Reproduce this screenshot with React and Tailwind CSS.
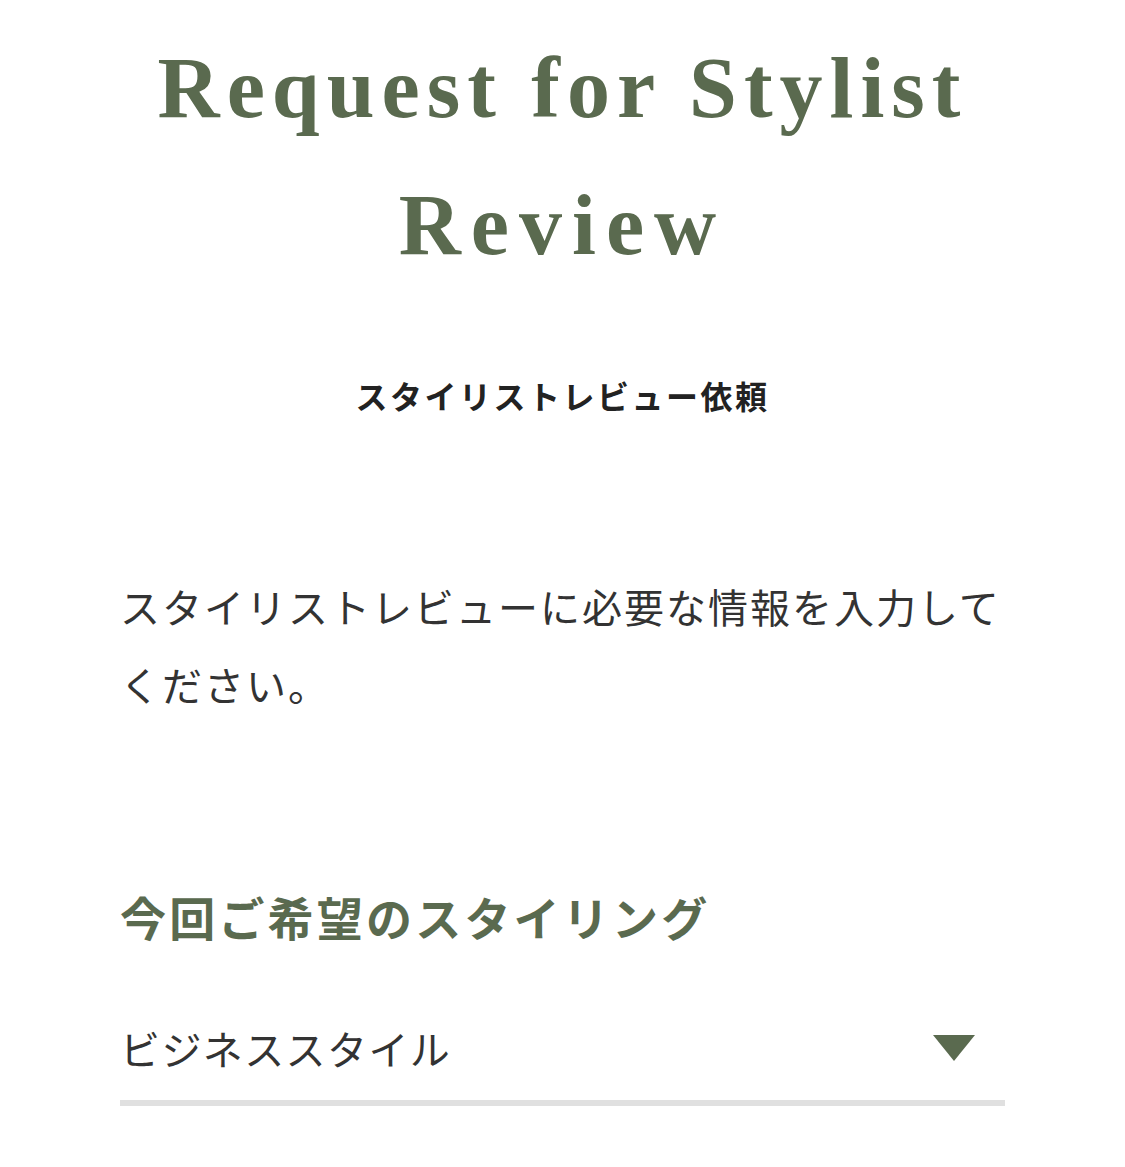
import React from "react";

const Triangle = () => (
  <svg width="42" height="26" viewBox="0 0 42 26" className="shrink-0">
    <polygon points="0,0 42,0 21,26" fill="#5a6a4f" />
  </svg>
);

const App = () => {
  return (
    <div className="min-h-[1167px] bg-white px-[120px]">
      <h1 className="pt-[20px] text-center font-['Liberation_Serif',serif] text-[86px] font-bold leading-[137px] tracking-[7px] text-[#5a6a4f]">
        Request for Stylist
        <br />
        <span className="tracking-[10px]">Review</span>
      </h1>
      <h2 className="mt-[80px] text-center font-['Liberation_Serif','Noto_Sans_CJK_JP',serif] text-[32px] font-bold leading-[48px] tracking-[2.5px] text-[#222]">
        スタイリストレビュー依頼
      </h2>
      <p className="mt-[145px] font-['Noto_Sans_CJK_JP',sans-serif] text-[40px] leading-[78px] tracking-[2px] text-[#333]">
        スタイリストレビューに必要な情報を入力してください。
      </p>
      <h3 className="mt-[161px] font-['Noto_Sans_CJK_JP',sans-serif] text-[46px] font-bold leading-[64px] tracking-[3.2px] text-[#5a6a4f]">
        今回ご希望のスタイリング
      </h3>
      <div className="mt-[70px] flex items-center justify-between border-b-[6px] border-[#e0e0e0] pb-[22px] pr-[30px]">
        <span className="font-['Noto_Sans_CJK_JP',sans-serif] text-[40px] leading-[60px] tracking-[1.4px] text-[#333]">
          ビジネススタイル
        </span>
        <Triangle />
      </div>
    </div>
  );
};

export default App;
